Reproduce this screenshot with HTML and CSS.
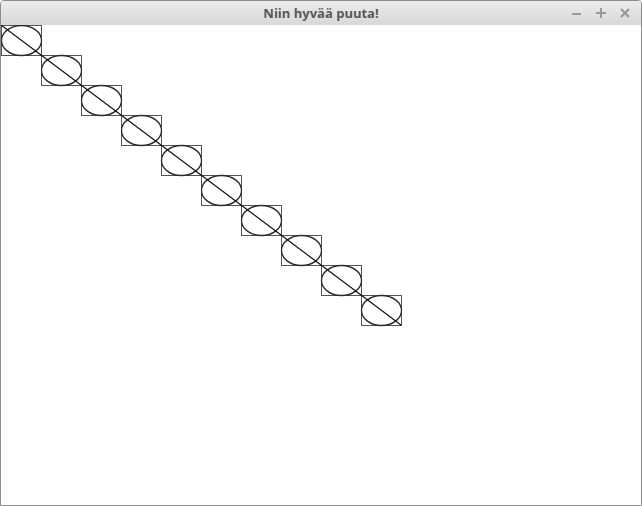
FILE: index.html
```html
<!DOCTYPE html>
<html>
<head>
<meta charset="utf-8">
<link rel="stylesheet" href="styles.css">
</head>
<body>
<div class="window">
  <div class="titlebar">
    <div class="title">Niin hyvää puuta!</div>
    <div class="controls">
      <svg class="btn" width="12" height="12" viewBox="0 0 12 12"><rect x="1" y="6" width="9" height="2" class="ico"/></svg>
      <svg class="btn" width="12" height="12" viewBox="0 0 12 12"><rect x="1" y="5" width="10" height="2" class="ico"/><rect x="5" y="1" width="2" height="10" class="ico"/></svg>
      <svg class="btn" width="12" height="12" viewBox="0 0 12 12"><path d="M2 2 L10 10 M10 2 L2 10" class="ico-x"/></svg>
    </div>
  </div>
  <svg class="canvas" width="640" height="480" viewBox="0 0 640 480">
    <g id="shapes"></g>
  </svg>
</div>
<script>
  var g = document.getElementById('shapes');
  var ns = 'http://www.w3.org/2000/svg';
  for (var i = 0; i < 10; i++) {
    var x = 40 * i, y = 30 * i;
    var r = document.createElementNS(ns, 'rect');
    r.setAttribute('x', x + 0.5); r.setAttribute('y', y + 0.5);
    r.setAttribute('width', 40); r.setAttribute('height', 30);
    r.setAttribute('class', 'box');
    g.appendChild(r);
    var e = document.createElementNS(ns, 'ellipse');
    e.setAttribute('cx', x + 20.5); e.setAttribute('cy', y + 15.5);
    e.setAttribute('rx', 20); e.setAttribute('ry', 15);
    e.setAttribute('class', 'oval');
    g.appendChild(e);
    var l = document.createElementNS(ns, 'line');
    l.setAttribute('x1', x); l.setAttribute('y1', y);
    l.setAttribute('x2', x + 40); l.setAttribute('y2', y + 30);
    l.setAttribute('class', 'diag');
    g.appendChild(l);
  }
</script>
</body>
</html>
```

FILE: styles.css
```css
html, body {
  margin: 0;
  padding: 0;
  background: #ffffff;
}
.window {
  width: 640px;
  height: 504px;
  border: 1px solid #8c8c8c;
  border-radius: 4px 4px 0 0;
  display: flex;
  flex-direction: column;
  background: #ffffff;
  overflow: hidden;
}
.titlebar {
  height: 24px;
  position: relative;
  background: linear-gradient(#ececec, #d8d8d8);
  display: flex;
  align-items: center;
  justify-content: center;
}
.title {
  font-family: "Open Sans", "Noto Sans", sans-serif;
  font-weight: 700;
  font-size: 13px;
  color: #595959;
}
.controls {
  position: absolute;
  right: 10px;
  top: 6px;
  display: flex;
  gap: 12px;
}
.btn {
  display: block;
}
.ico {
  fill: #999999;
}
.ico-x {
  stroke: #999999;
  stroke-width: 2.2;
}
.canvas {
  display: block;
}
.box {
  fill: none;
  stroke: #555555;
  stroke-width: 1;
}
.oval {
  fill: none;
  stroke: #2a2a2a;
  stroke-width: 1.3;
}
.diag {
  stroke: #111111;
  stroke-width: 1.2;
}
```
